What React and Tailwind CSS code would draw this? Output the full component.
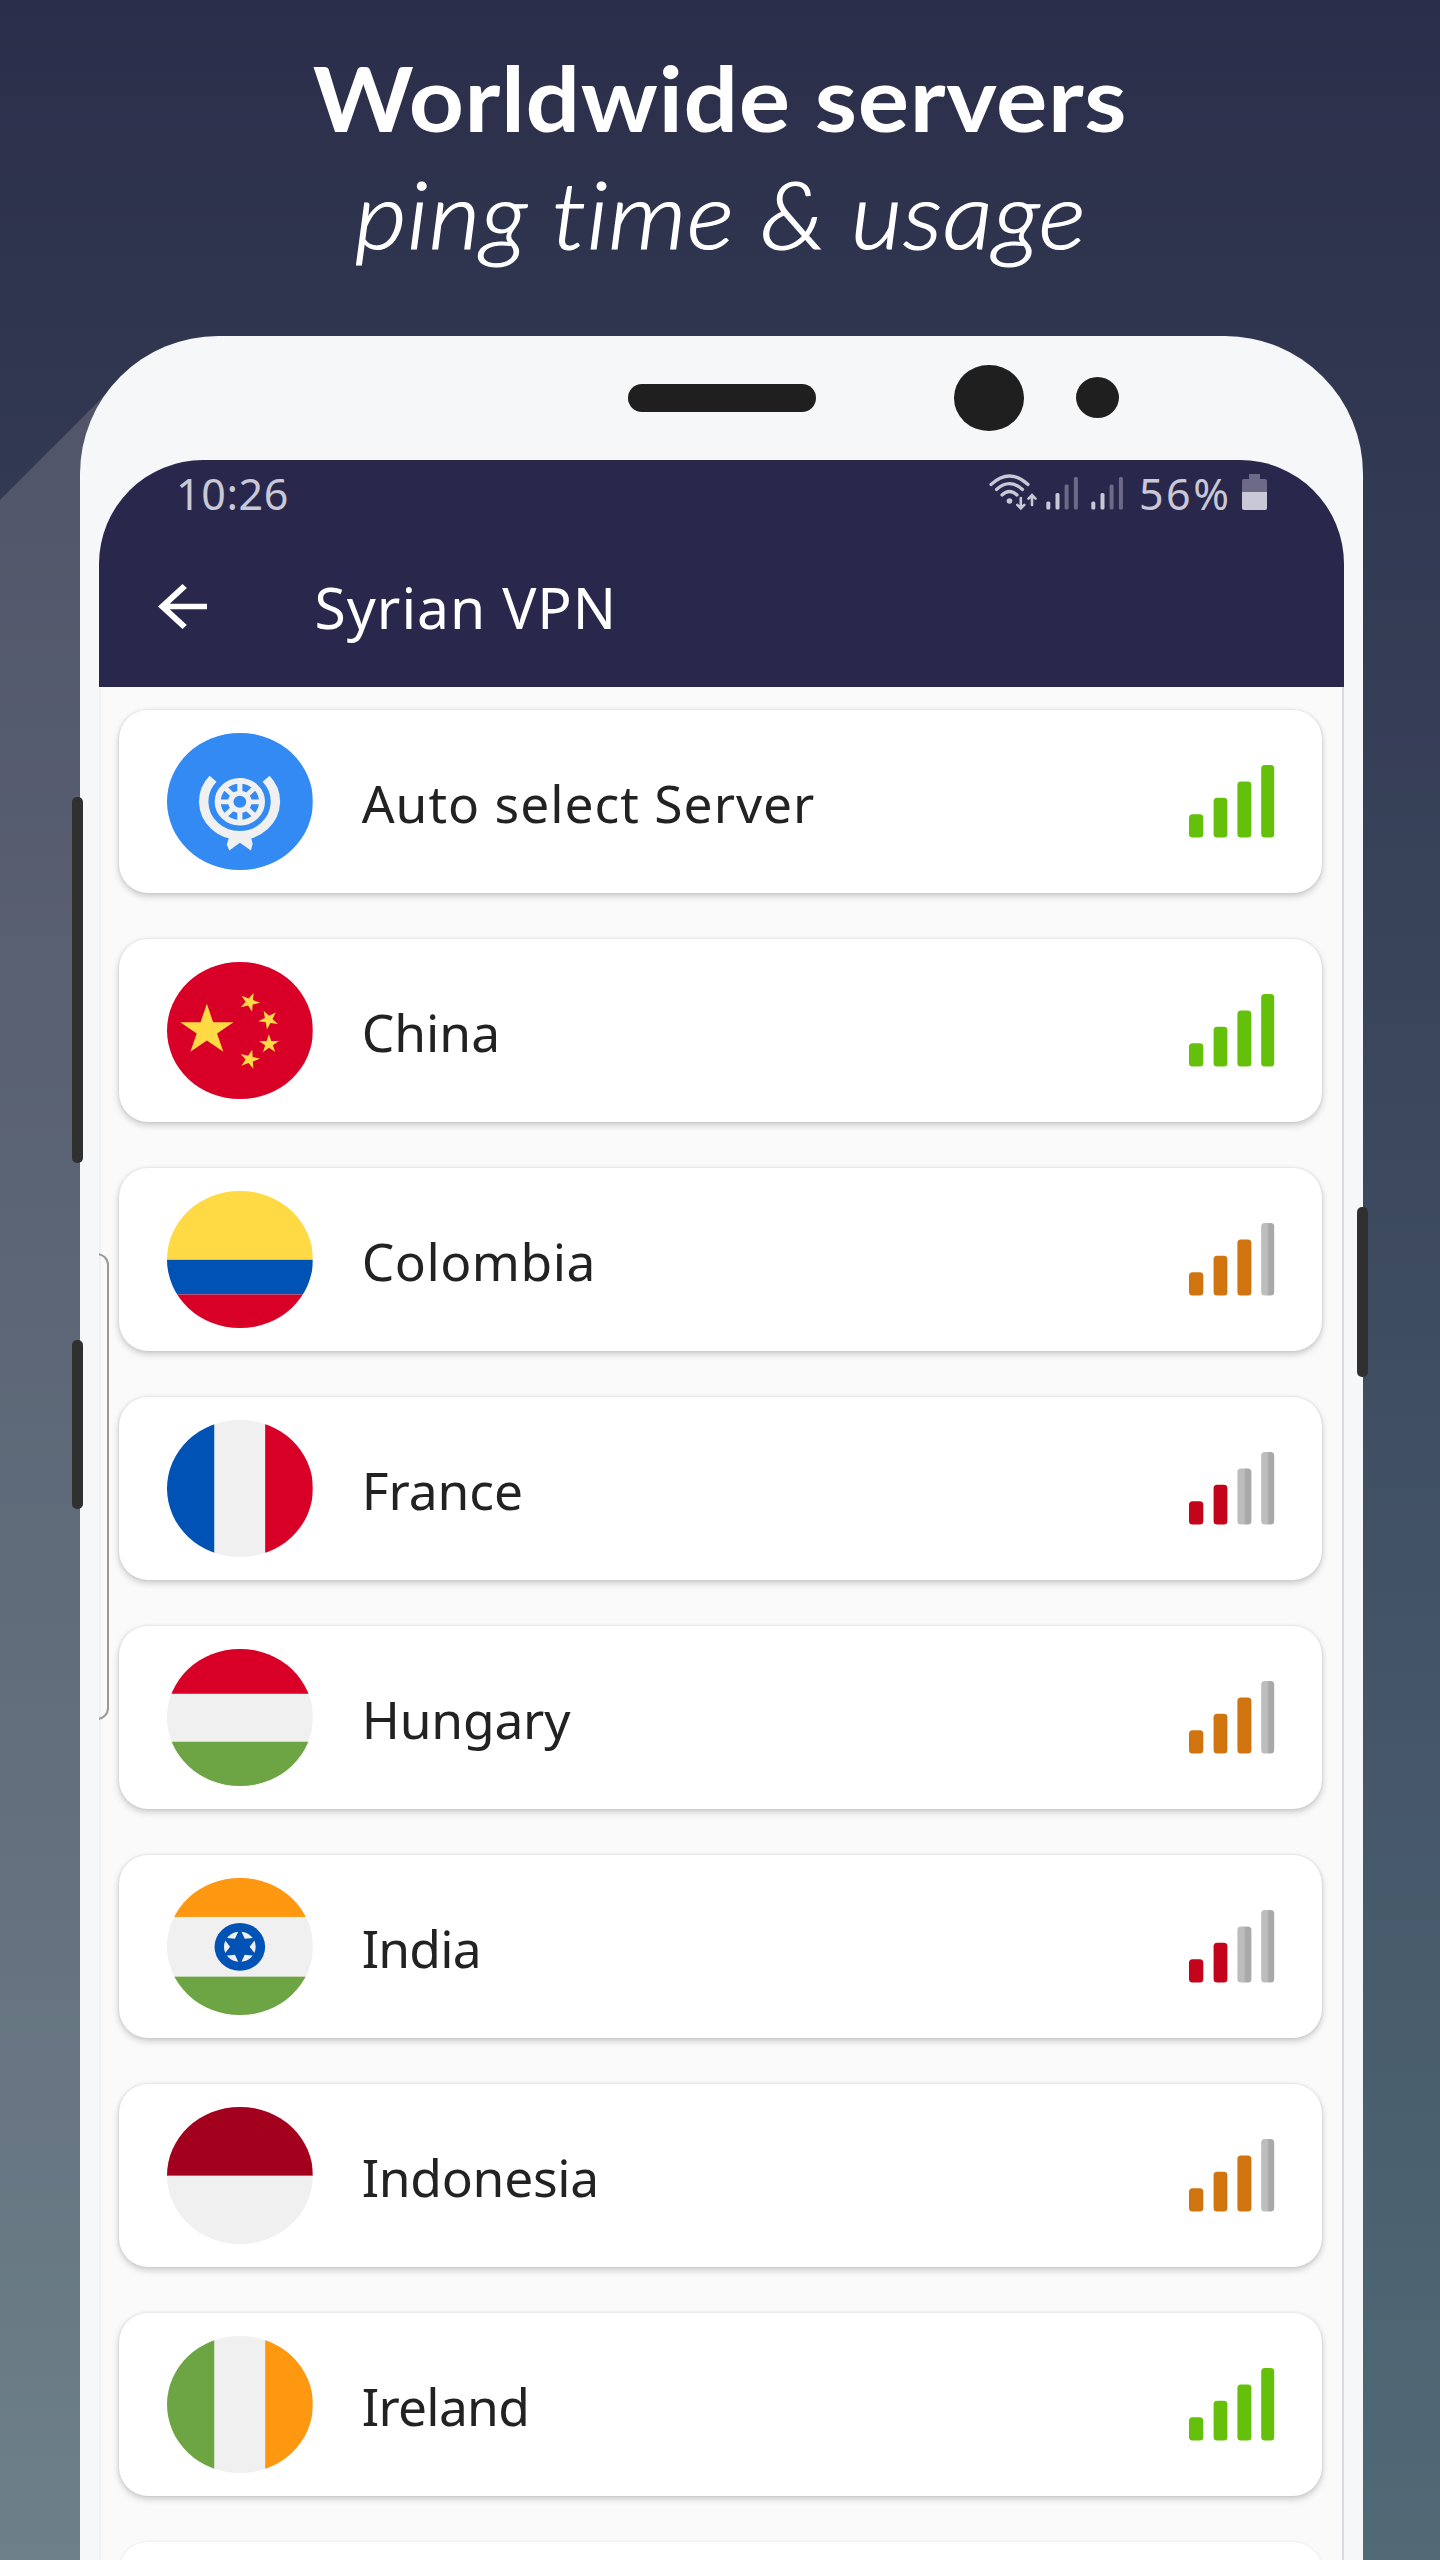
import React from 'react';

const RED = '#d80027';
const LIGHT = '#f0f0f0';

const Rects = ({ items }) => items.map(([x, y, w, h, fill], i) => (
  <rect key={i} x={x} y={y} width={w} height={h} fill={fill} />
));

const flags = {
  auto: (
    <>
      <rect width="512" height="512" fill="#338af3" />
      <path d="M161.8 166.5A126 126 0 1 0 348.2 166.5" transform="translate(0 4)" fill="none" stroke={LIGHT} strokeWidth="33" />
      <path d="M217 392 256 378 296 392 301 412 295 437 256 408 219 437 210 415Z" fill={LIGHT} />
      <circle cx="256" cy="256" r="78" fill="none" stroke={LIGHT} strokeWidth="21" />
      <circle cx="256" cy="256" r="32" fill="none" stroke={LIGHT} strokeWidth="19" />
      <path d="M256 172V224M256 288V340M172 256H224M288 256H340M197 197L233 233M279 279L315 315M315 197L279 233M233 279L197 315" stroke={LIGHT} strokeWidth="18" />
    </>
  ),
  china: (
    <>
      <rect width="512" height="512" fill={RED} />
      <path fill="#ffda44" d="M140.1 155.8l22.1 68h71.5l-57.8 42.1 22.1 68-57.9-42-57.9 42 22.2-68-57.9-42.1H118zM303.4 396.8l-16.9-20.8-25 9.7 14.5-22.5-16.9-20.9 25.9 6.9 14.6-22.5 1.4 26.8 26 6.9-25.1 9.6zM337.1 335.5l8-25.5-21.9-15.5 26.8-.4 7.9-25.6 8.7 25.4 26.8-.3-21.5 16 8.6 25.4-21.9-15.5zM382.4 187.9L370.6 212l19.2 18.7-26.5-3.8-11.8 24-4.6-26.4-26.6-3.8 23.8-12.5-4.6-26.5 19.2 18.7zM304.2 114.9l-2 26.7 24.9 10.1-26.1 6.4-1.9 26.8-14.1-22.8-26.1 6.4 17.3-20.5-14.2-22.7 24.9 10.1z" />
    </>
  ),
  colombia: <Rects items={[[0, 0, 512, 256, '#ffda44'], [0, 256, 512, 129, '#0052b4'], [0, 385, 512, 127, RED]]} />,
  france: <Rects items={[[0, 0, 167, 512, '#0052b4'], [167, 0, 178, 512, LIGHT], [345, 0, 167, 512, RED]]} />,
  hungary: <Rects items={[[0, 0, 512, 167, RED], [0, 167, 512, 178, LIGHT], [0, 345, 512, 167, '#6da544']]} />,
  india: (
    <>
      <Rects items={[[0, 0, 512, 145, '#ff9811'], [0, 145, 512, 222, LIGHT], [0, 367, 512, 145, '#6da544']]} />
      <circle cx="256" cy="256" r="89" fill="#0052b4" />
      <circle cx="256" cy="256" r="55.7" fill={LIGHT} />
      <path fill="#0052b4" d="M256 187.3l17.2 38.9 42.3-4.6-25.1 34.4 25.1 34.4-42.3-4.6L256 324.7l-17.2-38.9-42.3 4.6 25.1-34.4-25.1-34.4 42.3 4.6z" />
    </>
  ),
  indonesia: <Rects items={[[0, 0, 512, 256, '#a2001d'], [0, 256, 512, 256, LIGHT]]} />,
  ireland: <Rects items={[[0, 0, 167, 512, '#6da544'], [167, 0, 178, 512, LIGHT], [345, 0, 167, 512, '#ff9811']]} />,
};

const servers = [
  ['auto', 'Auto select Server', 4, 'tracking-[1px]'],
  ['china', 'China', 4, 'tracking-[0px]'],
  ['colombia', 'Colombia', 3, 'tracking-[0.5px]'],
  ['france', 'France', 2, 'tracking-[0px]'],
  ['hungary', 'Hungary', 3, 'tracking-[-0.2px]'],
  ['india', 'India', 2, 'tracking-[-0.8px]'],
  ['indonesia', 'Indonesia', 3, 'tracking-[-0.3px]'],
  ['ireland', 'Ireland', 4, 'tracking-[-0.7px]'],
];

const levelColor = { 4: '#64c00a', 3: '#d0740f', 2: '#c3041b' };
const bars = [
  [0, 49.3, 14.3],
  [24.6, 32.8, 13.8],
  [48.4, 16.4, 14],
  [72.2, 0, 13],
];

function Signal({ level }) {
  return (
    <svg className="h-[73px] w-[86px] shrink-0" viewBox="0 0 86 73">
      <defs>
        <linearGradient id="idle">
          <stop offset="0.45" stopColor="#bdbdbd" />
          <stop offset="0.6" stopColor="#a9a9a9" />
        </linearGradient>
      </defs>
      {bars.map(([x, y, w], i) => (
        <rect key={i} x={x} y={y} width={w} height={72.4 - y} rx="3.5" fill={i < level ? levelColor[level] : 'url(#idle)'} />
      ))}
    </svg>
  );
}

function ServerCard({ flag, name, level, tracking }) {
  return (
    <li className="flex h-[183.3px] shrink-0 items-center rounded-[29px] bg-white pr-[47.5px] pl-12 shadow-[0_3px_7px_rgba(0,0,0,0.2),0_0_3px_rgba(0,0,0,0.1)]">
      <svg className="h-[137.6px] w-[145.7px] shrink-0 rounded-[50%]" viewBox="0 0 512 512" preserveAspectRatio="none">
        {flags[flag]}
      </svg>
      <span className={`ml-[49px] flex-1 pt-[4px] text-[51.5px] leading-none whitespace-nowrap text-[#222] ${tracking}`}>{name}</span>
      <Signal level={level} />
    </li>
  );
}

function CellBars() {
  return (
    <svg className="h-[34px] w-[33px]" viewBox="0 0 33 34">
      <g fill="#c9c8d6">
        <rect x="0.3" y="25.5" width="4" height="8" rx="1.5" />
        <rect x="9.5" y="17" width="4" height="16.5" rx="1.5" />
      </g>
      <g fill="#6c6a86">
        <rect x="18.6" y="8.5" width="4" height="25" rx="1.5" />
        <rect x="27.9" y="1" width="4" height="32.5" rx="1.5" />
      </g>
    </svg>
  );
}

function StatusBar() {
  return (
    <div className="flex h-[70px] items-start justify-between pt-[13px] pr-[77px] pl-[77px] text-[43px] leading-[44px] text-[#c9c8d6]">
      <span className="mt-[-1px] tracking-[0.6px]">10:26</span>
      <div className="flex items-start">
        <svg className="mt-px h-[37px] w-[49px]" viewBox="0 0 49 37" fill="none" stroke="#c9c8d6" strokeLinecap="round">
          <path d="M2 10.500Q20.500 -6.500 39 10.500M7.500 15.500Q20.500 3.800 33.500 15.500M13 21Q20.500 14 28 21" strokeWidth="3.200" />
          <circle cx="20.500" cy="27" r="2.800" fill="#c9c8d6" stroke="none" />
          <path d="M31.800 24V33.500M28.300 30.800L31.800 34.300 35.300 30.800M43 31V21.500M39.500 24.700L43 21.200 46.500 24.700" strokeWidth="2.600" />
        </svg>
        <div className="mt-[3px] ml-[8px] flex gap-[12px]">
          <CellBars />
          <CellBars />
        </div>
        <span className="mt-[-1px] ml-[15px] w-[103px] tracking-[2.5px]">56%</span>
        <svg className="mt-[1px] h-[36px] w-[25px]" viewBox="0 0 25 36">
          <path d="M7 0H18V5H23Q25 5 25 7V18H0V7Q0 5 2 5H7Z" fill="#6c6a86" />
          <path d="M0 18H25V34Q25 36 23 36H2Q0 36 0 34Z" fill="#c9c8d6" />
        </svg>
      </div>
    </div>
  );
}

export default function App() {
  return (
    <div className="relative flex h-[2560px] w-[1440px] flex-col overflow-hidden bg-linear-to-b from-[#2b2e4a] to-[#516a76] font-['Noto_Sans',sans-serif]">
      <svg className="absolute top-0 left-0 h-[2560px] w-[400px]" viewBox="0 0 400 2560">
        <path d="M0 500L112 388V2560H0Z" fill="#fff3ee" fillOpacity="0.16" />
      </svg>

      <header className="flex h-[336px] shrink-0 flex-col items-center pt-[42px] font-['Lato',sans-serif] text-white">
        <h1 className="scale-x-[1.08] text-[89px] leading-[112px] font-bold tracking-[0.600px] whitespace-nowrap">Worldwide servers</h1>
        <p className="scale-x-[1.09] text-[92px] leading-[120px] font-light tracking-[0.400px] whitespace-nowrap italic [-webkit-text-stroke:1.2px_white]">ping time &amp; usage</p>
      </header>

      <div className="relative ml-[80px] flex h-[2224px] w-[1283px] flex-col rounded-t-[138px] bg-[#f6f7f9]">
        <div className="flex h-[123.600px] shrink-0 items-center pl-[548.400px]">
          <div className="h-[28.500px] w-[188px] rounded-full bg-[#1f1f1f]" />
          <div className="ml-[137.600px] h-[65.500px] w-[69.700px] rounded-[50%] bg-[#1f1f1f]" />
          <div className="ml-[52.300px] h-[41px] w-[43px] rounded-[50%] bg-[#1f1f1f]" />
        </div>

        <main className="relative mx-[19px] flex min-h-0 flex-1 flex-col overflow-hidden rounded-t-[104px] bg-[#fafafa]">
          <div className="h-[227px] shrink-0 bg-[#29284c] text-white">
            <StatusBar />
            <div className="flex h-[154px] items-center pl-[59px]">
              <svg className="h-[45px] w-[49px]" viewBox="4 4 16 16" preserveAspectRatio="none" fill="white">
                <path d="M20 11H7.830l5.590-5.590L12 4l-8 8 8 8 1.410-1.410L7.830 13H20z" />
              </svg>
              <h2 className="ml-[107.500px] pt-[1px] text-[57px] leading-none tracking-[1px] whitespace-nowrap">Syrian VPN</h2>
            </div>
          </div>
          <ul className="flex flex-col gap-[45.700px] border-x-2 border-l-[#f0f0f0] border-r-[#d8dade] pt-[23.300px] pr-[20px] pl-[18px]">
            {servers.map(([flag, name, level, tracking]) => (
              <ServerCard key={flag} flag={flag} name={name} level={level} tracking={tracking} />
            ))}
            <li className="h-[183px] shrink-0 rounded-[29px] bg-white shadow-[0_0_3px_rgba(0,0,0,0.1)]" />
          </ul>
          <div className="absolute top-[793px] left-[-4px] h-[467px] w-[14px] rounded-r-[12px] border-2 border-[#999]" />
        </main>

        <div className="absolute top-[461px] left-[-8px] h-[366px] w-[11px] rounded-[5px] bg-[#303030]" />
        <div className="absolute top-[1004px] left-[-8px] h-[169px] w-[11px] rounded-[5px] bg-[#303030]" />
        <div className="absolute top-[871px] left-[1277px] h-[170px] w-[11px] rounded-[5px] bg-[#303030]" />
      </div>
    </div>
  );
}
